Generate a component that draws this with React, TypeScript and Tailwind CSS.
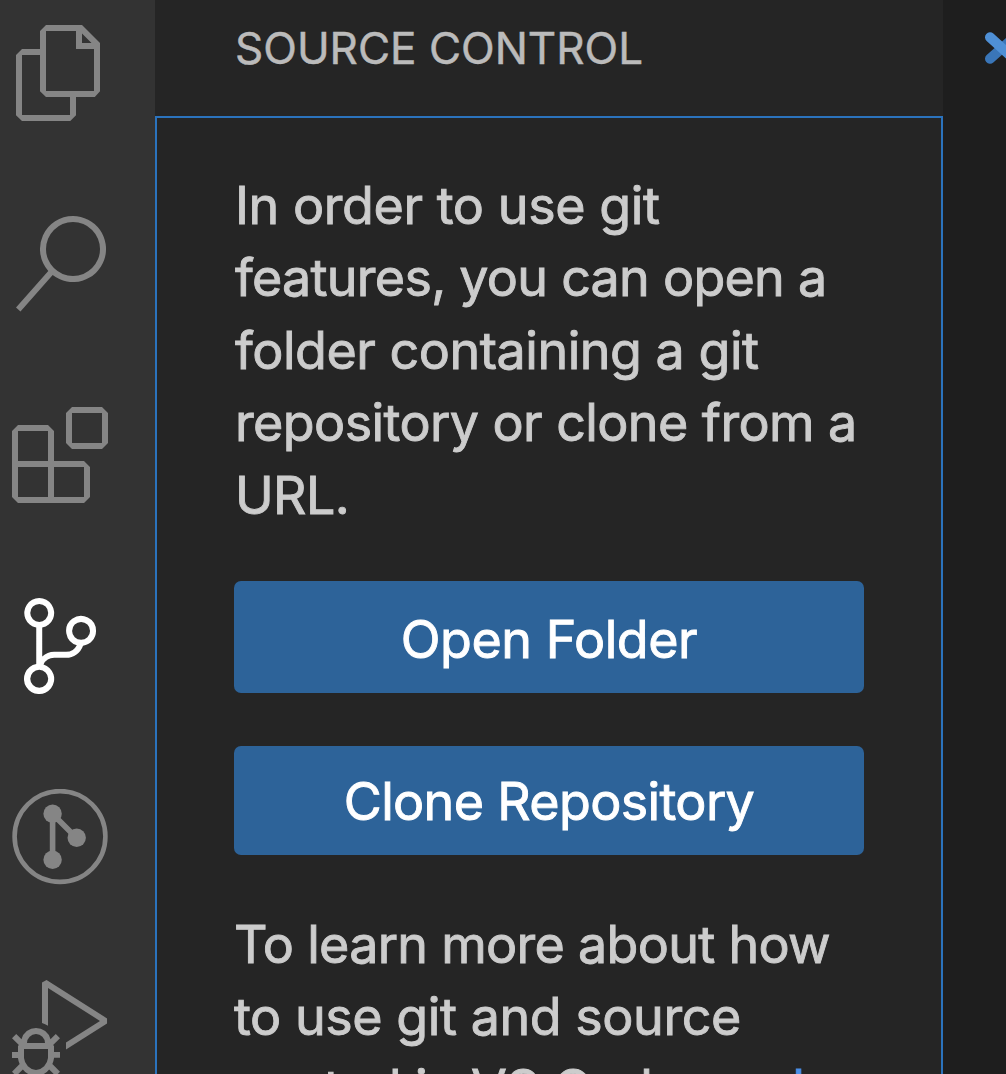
import type { ReactNode } from 'react';

function CodIcon({ d, className = 'text-[#858585]' }: { d: string; className?: string }) {
  return (
    <svg viewBox="0 0 24 24" className={`size-24 shrink-0 ${className}`} fill="currentColor" fillRule="evenodd" clipRule="evenodd">
      <path d={d} />
    </svg>
  );
}

const FILES =
  'M17.5 0h-9L7 1.5V6H2.5L1 7.5v15.07L2.5 24h12.07L16 22.57V18h4.7l1.3-1.43V4.5L17.5 0zm0 2.12l2.38 2.38H17.5V2.12zm-3 20.38h-12v-15H7v9.07L8.5 18h6v4.5zm6-6h-12v-15H16V6h4.5v10.5z';
const SEARCH =
  'M15.25 0a8.25 8.25 0 0 0-6.18 13.72L1 22.88l1.12 1 8.05-9.12A8.251 8.251 0 1 0 15.25.01V0zm0 15a6.75 6.75 0 1 1 0-13.5 6.75 6.75 0 0 1 0 13.5z';
const EXTENSIONS =
  'M13.5 1.5L15 0h7.5L24 1.5V9l-1.5 1.5H15L13.5 9V1.5zm1.5 0V9h7.5V1.5H15zM0 15V6l1.5-1.5H9L10.5 6v7.5H18l1.5 1.5v7.5L18 24H1.5L0 22.5V15zm9-1.5V6H1.5v7.5H9zM9 15H1.5v7.5H9V15zm1.5 7.5H18V15h-7.5v7.5z';
const SOURCE_CONTROL =
  'M21.007 8.222A3.738 3.738 0 0 0 15.045 5.2a3.737 3.737 0 0 0 1.156 6.583 2.988 2.988 0 0 1-2.668 1.67h-2.99a4.456 4.456 0 0 0-2.989 1.165V7.4a3.737 3.737 0 1 0-1.494 0v9.117a3.776 3.776 0 1 0 1.816.099 2.99 2.99 0 0 1 2.668-1.667h2.99a4.484 4.484 0 0 0 4.223-3.039 3.736 3.736 0 0 0 3.25-3.687zM4.565 3.738a2.242 2.242 0 1 1 4.484 0 2.242 2.242 0 0 1-4.484 0zm4.484 16.441a2.242 2.242 0 1 1-4.484 0 2.242 2.242 0 0 1 4.484 0zm8.221-9.715a2.242 2.242 0 1 1 0-4.485 2.242 2.242 0 0 1 0 4.485z';
const DEBUG =
  'M10.94 13.5l-1.32 1.32a3.73 3.73 0 0 0-7.24 0L1.06 13.5 0 14.56l1.72 1.72-.22.22V18H0v1.5h1.5v.08c.077.489.214.966.41 1.42L0 22.94 1.06 24l1.65-1.65A4.308 4.308 0 0 0 6 24a4.31 4.31 0 0 0 3.29-1.65L10.94 24 12 22.94 10.09 21c.198-.464.336-.951.41-1.45v-.1H12V18h-1.5v-1.5l-.22-.22L12 14.56l-1.06-1.06zM6 13.5a2.25 2.25 0 0 1 2.25 2.25h-4.5A2.25 2.25 0 0 1 6 13.5zm3 6a3.33 3.33 0 0 1-3 3 3.33 3.33 0 0 1-3-3v-2.25h6v2.25zm14.76-9.9v1.26L13.5 17.37V15.6l8.5-5.37L9 2v9.46a5.07 5.07 0 0 0-1.5-.72V.63L8.64 0l15.12 9.6z';

function GitLensIcon() {
  return (
    <svg viewBox="0 0 96 96" className="size-24 shrink-0 text-[#858585]" fill="currentColor" stroke="currentColor">
      <circle cx="48" cy="47.5" r="45.4" fill="none" strokeWidth="4.6" />
      <path d="M40.6 25v46M40.6 25l24 24" strokeWidth="5.6" fill="none" />
      <g stroke="none">
        <circle cx="40.6" cy="24.7" r="9.2" />
        <circle cx="64.7" cy="48.7" r="9.2" />
        <circle cx="40.6" cy="70.7" r="9.2" />
      </g>
    </svg>
  );
}

function Line({ className, children }: { className: string; children: ReactNode }) {
  return <span className={`block ${className}`}>{children}</span>;
}

export default function App() {
  return (
    <div className="flex h-[1074px] w-[1006px] overflow-hidden bg-[#1e1e1e] font-['Inter',sans-serif] text-[52px] leading-[72px] whitespace-nowrap text-[#cccccc]">
      <nav className="flex w-[155px] shrink-0 flex-col gap-[95px] overflow-hidden bg-[#333333] pt-[24.7px] pl-[11.5px]">
        <CodIcon d={FILES} />
        <CodIcon d={SEARCH} />
        <CodIcon d={EXTENSIONS} />
        <CodIcon d={SOURCE_CONTROL} className="text-white" />
        <GitLensIcon />
        <CodIcon d={DEBUG} />
      </nav>

      <section className="flex w-[788px] shrink-0 flex-col bg-[#252525]">
        <h2 className="h-[116px] shrink-0 pt-[22px] pl-[80px] text-[44px] leading-[53px] font-normal text-[#bbbbbb] [-webkit-text-stroke:0.5px]">
          SOURCE CONTROL
        </h2>
        <div className="h-[1000px] border-2 border-[#2b73bd] pt-[52px] pr-[77px] pl-[77px]">
          <p className="ml-px leading-[72.4px] [-webkit-text-stroke:0.9px]">
            <Line className="tracking-[-0.42px]">In order to use git</Line>
            <Line className="tracking-[-0.73px]">features, you can open a</Line>
            <Line className="tracking-[-0.47px]">folder containing a git</Line>
            <Line className="tracking-[-0.59px]">repository or clone from a</Line>
            <Line className="tracking-[-0.6px]">URL.</Line>
          </p>
          <button className="mt-[49px] flex h-28 w-[630px] items-center justify-center rounded-[7px] bg-[#2d6399] pt-[5px] tracking-[-0.45px] text-white [-webkit-text-stroke:0.9px]">
            Open Folder
          </button>
          <button className="mt-[53px] flex h-[109px] w-[630px] items-center justify-center rounded-[7px] bg-[#2d6399] pt-[3px] tracking-[-0.65px] text-white [-webkit-text-stroke:0.9px]">
            Clone Repository
          </button>
          <p className="mt-[54px] [-webkit-text-stroke:0.9px]">
            <Line className="tracking-[-0.71px]">To learn more about how</Line>
            <Line className="tracking-[-0.44px]">to use git and source</Line>
            <Line className="tracking-[-0.6px]">
              control in VS Code <a className="text-[#4a8fe8]">read</a>
            </Line>
          </p>
        </div>
      </section>

      <main className="flex min-w-0 flex-1 justify-end overflow-hidden bg-[#1e1e1e] pt-7">
        <svg viewBox="0 0 24 40" className="h-10 w-6 shrink-0" strokeWidth="10" strokeLinecap="round" fill="none">
          <path d="M8 30.8L32 9.5" stroke="#3a76b8" />
          <path d="M8 9.3L32 31" stroke="#4f90d6" />
        </svg>
      </main>
    </div>
  );
}
